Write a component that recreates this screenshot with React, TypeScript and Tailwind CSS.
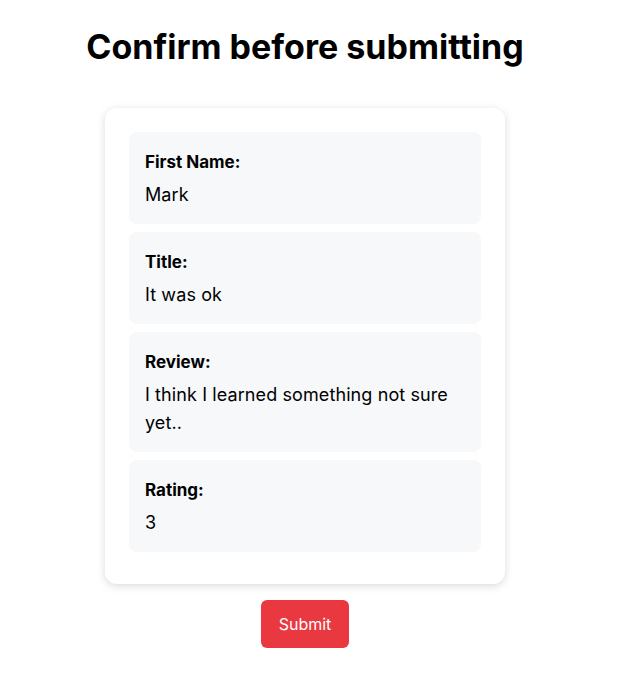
const fields = [
  { label: 'First Name:', value: 'Mark' },
  { label: 'Title:', value: 'It was ok' },
  { label: 'Review:', value: 'I think I learned something not sure yet..' },
  { label: 'Rating:', value: '3' },
];

export default function App() {
  return (
    <div className="w-[610px] flex flex-col items-center pt-[27px] text-black font-['Inter',sans-serif]">
      <h1 className="text-[34px] leading-10 font-bold">Confirm before submitting</h1>
      <div className="mt-[41px] w-[400px] bg-white rounded-xl shadow-[0_2px_8px_rgba(0,0,0,0.15)] p-6">
        {fields.map(f => (
          <div key={f.label} className="mb-2 bg-[#f7f8fa] rounded-lg px-4 pt-[18px] pb-[15px]">
            <p className="text-[17px] leading-6 font-bold">{f.label}</p>
            <p className="mt-[7px] text-lg leading-7 tracking-[0.1px]">{f.value}</p>
          </div>
        ))}
      </div>
      <button className="mt-4 h-12 w-[88px] rounded-md bg-[#e9383f] text-white text-base">
        Submit
      </button>
    </div>
  );
}
